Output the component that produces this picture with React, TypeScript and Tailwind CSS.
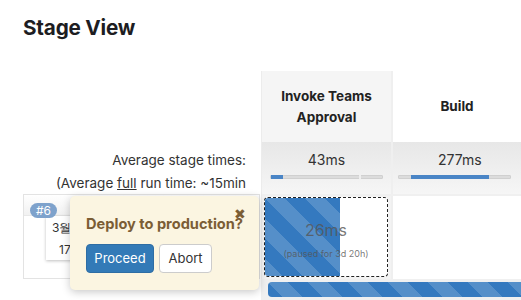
import React from "react";

const stripe =
  "bg-[#3479bf] bg-[linear-gradient(45deg,rgba(255,255,255,.16)_25%,transparent_25%,transparent_50%,rgba(255,255,255,.16)_50%,rgba(255,255,255,.16)_75%,transparent_75%,transparent)] bg-[length:40px_40px]";

export default function App() {
  return (
    <div className="w-[521px] h-[300px] overflow-hidden bg-white relative font-['Inter',sans-serif] text-[#333]">
      <h2 className="pl-[23px] pt-[14px] h-[71px] text-[20.7px] leading-[28px] font-bold text-[#1d1d22] tracking-[-0.2px]">
        Stage View
      </h2>
      <div className="flex">
        {/* left column */}
        <div className="w-[261px] shrink-0">
          <div className="h-[71px]" />
          <div className="h-[52px] pr-[15px] pt-[7px] text-right text-[13.5px] leading-[23px] whitespace-nowrap">
            <div>Average stage times:</div>
            <div>
              (Average <u>full</u> run time: ~15min
            </div>
          </div>
          <div className="ml-[23px] mr-[1px] h-[85px] border border-[#e3e3e3] relative">
            <div className="h-[21px] bg-[linear-gradient(#fff,#f1f1f1)] border-b border-[#e8e8e8] flex items-end">
              <span className="ml-[6px] mb-[-3px] h-[15px] px-[6px] rounded-full bg-[#7ea2cc] text-white text-[12px] leading-[15px] relative z-10">
                #6
              </span>
            </div>
            <div className="absolute left-[22px] top-[21px] w-[40px] h-[44px] bg-white shadow-[0_1px_3px_rgba(0,0,0,0.25)] text-[12px]">
              <div className="pl-[6px] pt-[3px] leading-[18px]">3월</div>
              <div className="pl-[13px] pt-[4px] leading-[18px]">17</div>
            </div>
          </div>
        </div>
        {/* table */}
        <div className="flex-1 flex">
          <div className="w-[132px] shrink-0 border-l border-[#ececec]">
            <div className="h-[71px] bg-[#f5f5f5] border-r-2 border-[#efefef] flex items-center justify-center text-center text-[13.5px] font-bold leading-[21px] px-2 text-[#222]">
              Invoke Teams Approval
            </div>
            <div className="h-[52px] bg-[linear-gradient(#e7e7e7,#f6f6f6)] border-r-2 border-[#efefef] flex flex-col items-center pt-[8px]">
              <div className="text-[14px] leading-[20px]">43ms</div>
              <div className="mt-[5px] w-[113px] h-[4px] bg-[#dcdcdc] border border-[#d0d0d0] rounded-[1px] relative">
                <div className="absolute left-0 top-[-1px] h-[4px] w-[12px] bg-[#4a85c6]" />
                <div className="absolute left-[88px] top-[-1px] h-[4px] w-[2px] bg-[#efefef]" />
              </div>
            </div>
            <div className="h-[2px] bg-[#f0f0f0]" />
            <div className="h-[85px] bg-[#f3f3f3] pl-[2px] pr-[3px] pt-[1px] border-r-2 border-[#efefef]">
              <div className="h-[80px] bg-white border border-dashed border-[#222] rounded-[4px] relative overflow-hidden">
                <div className={`absolute left-0 top-0 bottom-0 w-[75px] ${stripe}`} />
                <div className="relative flex flex-col items-center">
                  <div className="mt-[22px] text-[16px] leading-[20px] text-[#555]/80">26ms</div>
                  <div className="mt-[8px] text-[9px] leading-[11px] text-[#555]/80">(paused for 3d 20h)</div>
                </div>
              </div>
            </div>
          </div>
          <div className="flex-1">
            <div className="h-[71px] bg-white flex items-center justify-center text-[13.5px] font-bold text-[#222]">
              Build
            </div>
            <div className="h-[52px] bg-[linear-gradient(#e7e7e7,#f6f6f6)] flex flex-col items-start pl-[5px] pt-[8px]">
              <div className="ml-[40px] text-[14px] leading-[20px]">277ms</div>
              <div className="mt-[5px] w-[113px] h-[4px] bg-[#dcdcdc] border border-[#d0d0d0] rounded-[1px] relative">
                <div className="absolute left-[12px] top-[-1px] h-[4px] w-[78px] bg-[#4a85c6]" />
              </div>
            </div>
            <div className="h-[2px] bg-[#f0f0f0]" />
            <div className="h-[85px] bg-white" />
          </div>
        </div>
      </div>
      {/* bottom striped bar */}
      <div className="absolute left-[261px] top-[279px] right-0 h-[21px] bg-[#f0f0f0] pl-[7px] pt-[3px]">
        <div className={`h-[15px] rounded-l-[4px] ${stripe}`} />
      </div>
      {/* popover */}
      <div className="absolute left-[70px] top-[196px] w-[189px] h-[94px] bg-[#fbf5e1] rounded-[5px] shadow-[0_2px_8px_rgba(0,0,0,0.22)] z-20">
        <div className="pl-[16px] pt-[18px] text-[14.6px] leading-[20px] font-bold text-[#7b5d35]">Deploy to production?</div>
        <div className="absolute right-[13px] top-[11px] text-[14px] leading-[14px] text-[#7b5d35]">✖</div>
        <div className="flex gap-[5px] pl-[16px] mt-[10px]">
          <button className="w-[68px] h-[29px] rounded-[4px] bg-[#337ab7] text-white text-[13px] border border-[#2e6da4]">Proceed</button>
          <button className="w-[53px] h-[29px] rounded-[4px] bg-white text-[#333] text-[13px] border border-[#ccc]">Abort</button>
        </div>
      </div>
    </div>
  );
}
